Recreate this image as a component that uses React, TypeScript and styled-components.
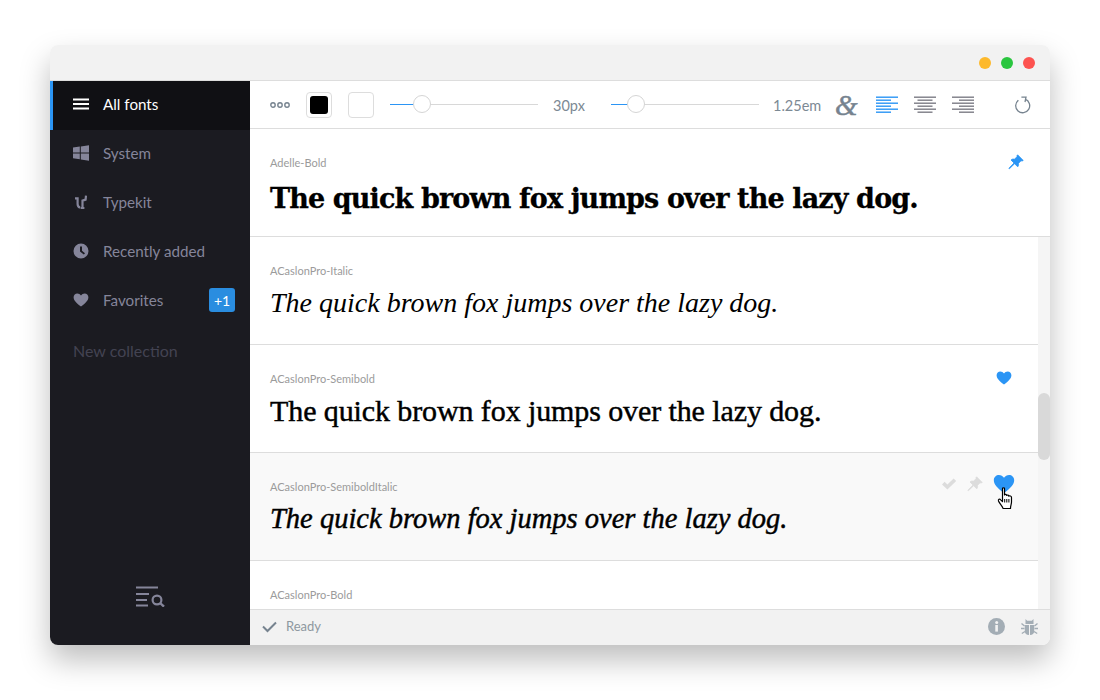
import React from "react";
import styled, { createGlobalStyle } from "styled-components";

const Global = createGlobalStyle`
  html, body { margin: 0; padding: 0; background: #fff; }
  body { font-family: Lato, "Open Sans", sans-serif; }
`;

const Page = styled.div`
  width: 1100px;
  height: 700px;
  box-sizing: border-box;
  padding: 45px 50px 55px;
`;

const Win = styled.div`
  width: 1000px;
  height: 600px;
  display: flex;
  flex-direction: column;
  border-radius: 8px;
  overflow: hidden;
  background: #fff;
  box-shadow: 0 15px 30px rgba(0, 0, 0, 0.26);
`;

const TitleBar = styled.div`
  height: 36px;
  flex: none;
  box-sizing: border-box;
  background: #f2f2f2;
  border-bottom: 1px solid #ddd;
  display: flex;
  align-items: center;
  justify-content: flex-end;
  gap: 10px;
  padding: 0 15px 0 0;
`;

const Light = styled.span<{ $c: string }>`
  width: 12px;
  height: 12px;
  border-radius: 50%;
  background: ${(p) => p.$c};
`;

const Body = styled.div`
  flex: 1;
  display: flex;
  min-height: 0;
`;

const Sidebar = styled.nav`
  width: 200px;
  flex: none;
  background: #1b1b21;
  display: flex;
  flex-direction: column;
`;

const NavItem = styled.div<{ $active?: boolean }>`
  height: 49px;
  flex: none;
  box-sizing: border-box;
  display: flex;
  align-items: center;
  padding: 0 15px 3px ${(p) => (p.$active ? 20 : 23)}px;
  border-left: ${(p) => (p.$active ? "3px solid #2b95f5" : "none")};
  background: ${(p) => (p.$active ? "#101014" : "transparent")};
  color: ${(p) => (p.$active ? "#fff" : "#85859a")};
  font-size: 15.2px;
`;

const NavIcon = styled.svg`
  width: 16px;
  height: 16px;
  flex: none;
  margin-right: 14px;
  fill: currentColor;
`;

const NavLabel = styled.span`
  flex: 1;
`;

const Badge = styled.span`
  width: 26px;
  height: 24px;
  border-radius: 3px;
  background: #2a8de0;
  color: #fff;
  font-size: 14px;
  display: flex;
  align-items: center;
  justify-content: center;
`;

const NewCollection = styled.div`
  margin-top: 14px;
  padding-left: 23px;
  color: #434352;
  font-size: 16px;
  line-height: 22px;
`;

const SideFooter = styled.div`
  margin-top: auto;
  height: 59px;
  display: flex;
  justify-content: center;
  color: #85859a;
`;

const Main = styled.div`
  flex: 1;
  min-width: 0;
  display: flex;
  flex-direction: column;
`;

const Toolbar = styled.div`
  height: 48px;
  flex: none;
  box-sizing: border-box;
  border-bottom: 1px solid #ddd;
  display: flex;
  align-items: center;
  padding: 0 0 0 20px;
`;

const Swatch = styled.span<{ $fill?: string; $ml: number }>`
  width: 26px;
  height: 26px;
  box-sizing: border-box;
  flex: none;
  margin-left: ${(p) => p.$ml}px;
  border: 1px solid #ddd;
  border-radius: 4px;
  background: #fff;
  padding: 3px;
  display: flex;
  &::before {
    content: "";
    flex: 1;
    border-radius: 3px;
    background: ${(p) => p.$fill || "transparent"};
  }
`;

const Slider = styled.div<{ $ml: number }>`
  position: relative;
  width: 148px;
  height: 1px;
  flex: none;
  margin-left: ${(p) => p.$ml}px;
  background: #d8d8d8;
`;

const SliderFill = styled.div`
  height: 1px;
  background: #2b95f5;
`;

const Thumb = styled.div`
  position: absolute;
  top: -9px;
  width: 18px;
  height: 18px;
  box-sizing: border-box;
  border: 1px solid #d5d5d5;
  border-radius: 50%;
  background: #fff;
`;

const ToolLabel = styled.span<{ $ml: number; $w: number }>`
  margin-left: ${(p) => p.$ml}px;
  width: ${(p) => p.$w}px;
  flex: none;
  font-size: 14.5px;
  padding-top: 1px;
  color: #7c8994;
`;

const Amp = styled.span`
  width: 22px;
  flex: none;
  margin-left: 14px;
  font-family: "Liberation Serif", serif;
  font-style: italic;
  font-size: 29px;
  line-height: 24px;
  -webkit-text-stroke: 0.5px #76838f;
  text-align: center;
  color: #76838f;
`;

const ToolIcon = styled.svg<{ $ml: number }>`
  flex: none;
  margin-left: ${(p) => p.$ml}px;
  display: block;
`;

const Row = styled.div<{ $hover?: boolean; $clip?: boolean }>`
  position: relative;
  height: 108px;
  flex: none;
  box-sizing: border-box;
  padding: 26px 20px 0;
  background: ${(p) => (p.$hover ? "#f9f9f9" : "#fff")};
  border-bottom: ${(p) => (p.$clip ? "none" : "1px solid #ddd")};
`;

const FontName = styled.div`
  font-size: 11px;
  line-height: 16px;
  color: #9b9b9b;
`;

const Sample = styled.div<{
  $family: string;
  $size: number;
  $weight: number;
  $italic?: boolean;
  $spacing: number;
  $stroke?: number;
  $top: number;
}>`
  margin-top: ${(p) => p.$top}px;
  font-family: ${(p) => p.$family};
  font-size: ${(p) => p.$size}px;
  font-weight: ${(p) => p.$weight};
  font-style: ${(p) => (p.$italic ? "italic" : "normal")};
  letter-spacing: ${(p) => p.$spacing}px;
  -webkit-text-stroke: ${(p) => p.$stroke || 0}px #000;
  line-height: 36px;
  color: #000;
  white-space: nowrap;
`;

const RowActions = styled.div<{ $right: number; $top: number }>`
  position: absolute;
  right: ${(p) => p.$right}px;
  top: ${(p) => p.$top}px;
  display: flex;
  align-items: center;
  gap: 10px;
`;

const Scroller = styled.div`
  flex: 1;
  min-height: 0;
  display: flex;
`;

const List = styled.div`
  flex: 1;
  min-width: 0;
  overflow: hidden;
  display: flex;
  flex-direction: column;
`;

const Track = styled.div`
  width: 12px;
  flex: none;
  box-sizing: border-box;
  padding-top: 156px;
  background: #f5f5f5;
`;

const ScrollThumb = styled.div`
  height: 67px;
  border-radius: 6px;
  background: #d9d9d9;
`;

const StatusBar = styled.div`
  height: 36px;
  flex: none;
  box-sizing: border-box;
  background: #f2f2f2;
  border-top: 1px solid #ddd;
  display: flex;
  align-items: center;
  padding: 0 12px 2px;
  color: #8e98a0;
  font-size: 13px;
`;

const StatusText = styled.span`
  margin-left: 9px;
  padding-bottom: 2px;
  flex: 1;
`;

const Cursor = styled.svg`
  position: absolute;
  right: 24px;
  top: 34px;
`;

const HEART = "M8 14.6 C3 10.6 .6 8.2 .6 5.2 C.6 2.9 2.4 1.4 4.3 1.4 C5.8 1.4 7.2 2.2 8 3.5 C8.8 2.2 10.2 1.4 11.7 1.4 C13.6 1.4 15.4 2.9 15.4 5.2 C15.4 8.2 13 10.6 8 14.6 Z";
const PIN = "M9.6 .8 L15.2 6.4 C14.6 7 13.8 7.1 13 6.8 L10.4 9.4 C10.8 10.8 10.5 12 9.7 12.8 L6.6 9.7 L1.4 14.8 L.9 14.3 L6 9 L3 6 C3.9 5.1 5.1 4.8 6.4 5.3 L9 2.7 C8.8 2 9 1.3 9.6 .8 Z";
const CHECK = "M1 8.4 L3.6 5.8 L6.4 8.6 L12.6 2.4 L15.2 5 L6.4 13.6 Z";

const Heart = ({ s, c }: { s: number; c: string }) => (
  <svg width={s} height={s} viewBox="0 0 16 16" fill={c}><path d={HEART} /></svg>
);
const Pin = ({ s, c }: { s: number; c: string }) => (
  <svg width={s} height={s} viewBox="0 0 16 16" fill={c} stroke={c} strokeWidth="0.8" strokeLinejoin="round"><path d={PIN} /></svg>
);
const Check = ({ s, c }: { s: number; c: string }) => (
  <svg width={s} height={s} viewBox="0 0 16 16" fill={c}><path d={CHECK} /></svg>
);

const Align = ({ c, ml, kind }: { c: string; ml: number; kind: "l" | "c" | "r" }) => {
  const lines = [22, 15, 22, 15, 22, 15];
  return (
    <ToolIcon $ml={ml} width="22" height="18" viewBox="0 0 22 18">
      {lines.map((w, i) => {
        const x = kind === "l" ? 0 : kind === "c" ? (22 - w) / 2 : 22 - w;
        return <rect key={i} x={x} y={i * 3 + 0.5} width={w} height="1.4" fill={c} />;
      })}
    </ToolIcon>
  );
};

const SERIF = '"Liberation Serif", serif';

export default function App() {
  return (
    <Page>
      <Global />
      <Win>
        <TitleBar>
          <Light $c="#fdb92c" />
          <Light $c="#2ac63f" />
          <Light $c="#fd5350" />
        </TitleBar>
        <Body>
          <Sidebar>
            <NavItem $active>
              <NavIcon viewBox="0 0 16 16">
                <rect x="0" y="2.5" width="16" height="2" />
                <rect x="0" y="7" width="16" height="2" />
                <rect x="0" y="11.5" width="16" height="2" />
              </NavIcon>
              <NavLabel>All fonts</NavLabel>
            </NavItem>
            <NavItem>
              <NavIcon viewBox="0 0 16 16">
                <path d="M0 2.6 L6.8 1.6 V7.4 H0 Z M7.8 1.4 L16 .2 V7.4 H7.8 Z M0 8.4 H6.8 V14.3 L0 13.3 Z M7.8 8.4 H16 V15.8 L7.8 14.5 Z" />
              </NavIcon>
              <NavLabel>System</NavLabel>
            </NavItem>
            <NavItem>
              <NavIcon viewBox="0 0 16 16">
                <path d="M2 4.4 H4.6 V10 C4.6 12.2 5.4 13 7 13.6 M7.6 14 H11.4 M9.5 13.6 V6.6 L12.6 5.6 L13 1.6" fill="none" stroke="currentColor" strokeWidth="2.2" />
              </NavIcon>
              <NavLabel>Typekit</NavLabel>
            </NavItem>
            <NavItem>
              <NavIcon viewBox="0 0 16 16">
                <path fillRule="evenodd" d="M8 .5 A7.5 7.5 0 1 1 8 15.5 A7.5 7.5 0 1 1 8 .5 Z M7 3.5 V8.6 L10.8 11.6 L12 10.2 L9 7.8 V3.5 Z" />
              </NavIcon>
              <NavLabel>Recently added</NavLabel>
            </NavItem>
            <NavItem>
              <NavIcon viewBox="0 0 16 16"><path d={HEART} /></NavIcon>
              <NavLabel>Favorites</NavLabel>
              <Badge>+1</Badge>
            </NavItem>
            <NewCollection>New collection</NewCollection>
            <SideFooter>
              <svg width="29" height="21" viewBox="0 0 29 21" fill="none" stroke="currentColor" strokeWidth="1.8">
                <path d="M0 1.5 H22 M0 8 H13 M0 14 H11 M0 19.5 H12" />
                <circle cx="21" cy="14" r="4.4" strokeWidth="2.2" />
                <path d="M24.2 17.2 L28 20.6" strokeWidth="2.4" />
              </svg>
            </SideFooter>
          </Sidebar>
          <Main>
            <Toolbar>
              <svg width="20" height="8" viewBox="0 0 20 8" fill="none" stroke="#76838f" strokeWidth="1.4">
                <circle cx="3" cy="4" r="2.2" />
                <circle cx="10" cy="4" r="2.2" />
                <circle cx="17" cy="4" r="2.2" />
              </svg>
              <Swatch $ml={16} $fill="#000" />
              <Swatch $ml={16} />
              <Slider $ml={16}>
                <SliderFill style={{ width: 24 }} />
                <Thumb style={{ left: 23 }} />
              </Slider>
              <ToolLabel $ml={15} $w={43}>30px</ToolLabel>
              <Slider $ml={15}>
                <SliderFill style={{ width: 17 }} />
                <Thumb style={{ left: 16 }} />
              </Slider>
              <ToolLabel $ml={14} $w={48}>1.25em</ToolLabel>
              <Amp>&amp;</Amp>
              <Align c="#2b95f5" ml={19} kind="l" />
              <Align c="#7d7d85" ml={16} kind="c" />
              <Align c="#7d7d85" ml={16} kind="r" />
              <ToolIcon $ml={40} width="17" height="18" viewBox="0 0 17 18" fill="none" stroke="#76838f" strokeWidth="1.3">
                <path d="M4.4 4.2 A7 7 0 1 0 11.2 3.2 M7.4 1.2 H12 L11 6" />
              </ToolIcon>
            </Toolbar>
            <Row>
              <FontName>Adelle-Bold</FontName>
              <Sample $family='"DejaVu Serif", serif' $size={27} $weight={700} $spacing={-0.87} $stroke={0.3} $top={10}>
                The quick brown fox jumps over the lazy dog.
              </Sample>
              <RowActions $right={26} $top={25}><Pin s={16} c="#2b95f5" /></RowActions>
            </Row>
            <Scroller>
              <List>
                <Row>
                  <FontName>ACaslonPro-Italic</FontName>
                  <Sample $family={SERIF} $size={28} $weight={400} $italic $spacing={0} $top={6}>
                    The quick brown fox jumps over the lazy dog.
                  </Sample>
                </Row>
                <Row>
                  <FontName>ACaslonPro-Semibold</FontName>
                  <Sample $family={SERIF} $size={30} $weight={400} $spacing={-0.1} $stroke={0.45} $top={6}>
                    The quick brown fox jumps over the lazy dog.
                  </Sample>
                  <RowActions $right={26} $top={25}><Heart s={16} c="#2b95f5" /></RowActions>
                </Row>
                <Row $hover>
                  <FontName>ACaslonPro-SemiboldItalic</FontName>
                  <Sample $family={SERIF} $size={28.5} $weight={400} $italic $spacing={0} $stroke={0.45} $top={6}>
                    The quick brown fox jumps over the lazy dog.
                  </Sample>
                  <RowActions $right={23} $top={20}>
                    <Check s={16} c="#dcdcdc" />
                    <Pin s={16} c="#dcdcdc" />
                    <Heart s={22} c="#2b95f5" />
                  </RowActions>
                  <Cursor width="17" height="23" viewBox="0 0 16 23">
                    <path d="M5 1.5 C5 .5 7 .5 7 1.5 V8 C7.5 7 9 7.2 9.2 8.5 C9.8 7.6 11.2 8 11.3 9.2 C12 8.5 14 9 14 10.5 V15 C14 17 13 18.5 13 21.5 H5.5 C5 19 2 16.5 1 14 C.5 12.5 2 11.5 3.2 12.8 L5 14.6 Z" fill="#fff" stroke="#000" strokeWidth="1.2" strokeLinejoin="round" />
                    <path d="M7.2 12 V15.5 M9.3 12 V15.5 M11.4 12 V15.5" stroke="#000" strokeWidth="1" />
                  </Cursor>
                </Row>
                <Row $clip>
                  <FontName>ACaslonPro-Bold</FontName>
                </Row>
              </List>
              <Track><ScrollThumb /></Track>
            </Scroller>
            <StatusBar>
              <svg width="15" height="12" viewBox="0 0 15 12" fill="none" stroke="#76838f" strokeWidth="2">
                <path d="M1 5.5 L5.5 10 L14 1.5" />
              </svg>
              <StatusText>Ready</StatusText>
              <svg width="17" height="17" viewBox="0 0 17 17">
                <circle cx="8.5" cy="8.5" r="8.5" fill="#a3adb5" />
                <rect x="7.3" y="7" width="2.6" height="6.6" fill="#f2f2f2" />
                <circle cx="8.7" cy="4.6" r="1.5" fill="#f2f2f2" />
              </svg>
              <svg style={{ marginLeft: 16 }} width="17" height="18" viewBox="0 0 17 18" fill="#a3adb5">
                <path d="M4.5 1 L6.2 2.8 H10.8 L12.5 1 V6 H4.5 Z" />
                <path d="M3.8 7 H8 V17 C5.5 17 3.8 15.5 3.8 13 Z M9 7 H13.2 V13 C13.2 15.5 11.5 17 9 17 Z" />
                <path d="M.5 5.5 L3.5 8 M16.5 5.5 L13.5 8 M0 10.5 H3.5 M17 10.5 H13.5 M.8 15.5 L4 13.5 M16.2 15.5 L13 13.5" stroke="#a3adb5" strokeWidth="1.4" />
              </svg>
            </StatusBar>
          </Main>
        </Body>
      </Win>
    </Page>
  );
}
